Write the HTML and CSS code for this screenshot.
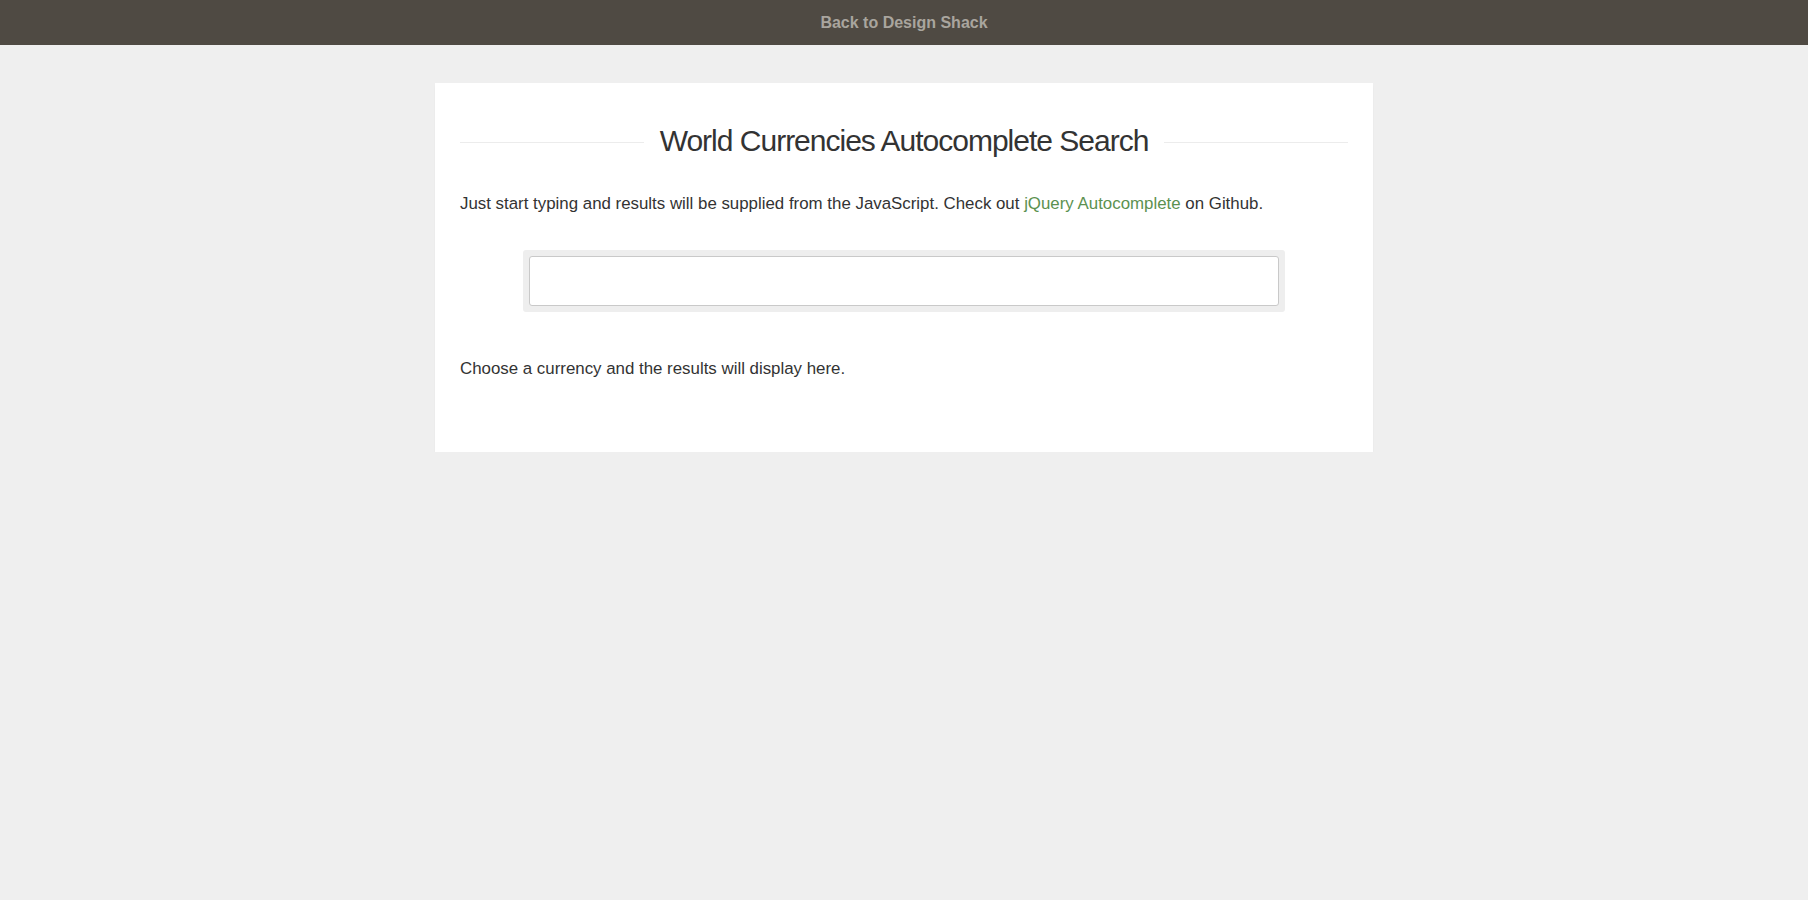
FILE: index.html
```html
<!DOCTYPE html>
<html lang="en">
<head>
<meta charset="utf-8">
<title>World Currencies Autocomplete Search</title>
<link rel="stylesheet" href="styles.css">
</head>
<body>
<div class="topbar"><a href="#" class="back">Back to Design Shack</a></div>
<main class="card">
  <h1 class="title"><span>World Currencies Autocomplete Search</span></h1>
  <p class="intro">Just start typing and results will be supplied from the JavaScript. Check out <a href="#" class="link">jQuery Autocomplete</a> on Github.</p>
  <div class="search-wrap"><input type="text" class="search" aria-label="Currency"></div>
  <p class="result">Choose a currency and the results will display here.</p>
</main>
</body>
</html>
```

FILE: styles.css
```css
html, body {
  margin: 0;
  padding: 0;
}
body {
  background: #efefef;
  font-family: "Liberation Sans", Arial, sans-serif;
  color: #333;
}
.topbar {
  height: 45px;
  background: #4f4a43;
  display: flex;
  align-items: center;
  justify-content: center;
}
.back {
  color: #a9a59e;
  font-weight: bold;
  font-size: 16px;
  text-decoration: none;
  line-height: 1;
  padding-top: 1px;
}
.card {
  width: 888px;
  margin: 38px auto 0;
  background: #fff;
  padding: 41px 25px 71px;
  box-shadow: 0 2px 2px -1px rgba(0,0,0,0.16);
}
.title {
  display: flex;
  align-items: center;
  gap: 16px;
  margin: 0;
  font-weight: normal;
  font-size: 30px;
  letter-spacing: -1px;
  line-height: 34px;
  color: #333;
}
.title::before, .title::after {
  content: "";
  flex: 1;
  height: 1px;
  background: #ececec;
  margin-top: 3px;
}
.intro {
  margin: 34px 0 0;
  font-size: 16.88px;
  line-height: 24px;
}
.link {
  color: #5b9150;
  text-decoration: none;
}
.search-wrap {
  width: 750px;
  margin: 34px auto 0;
  padding: 6px;
  background: #eeeeee;
  border-radius: 3px;
}
.search {
  display: block;
  box-sizing: border-box;
  width: 750px;
  height: 50px;
  margin: 0;
  border: 1px solid #c9c9c9;
  border-radius: 3px;
  background: #fff;
  padding: 0 10px;
  font-size: 16px;
  font-family: inherit;
  outline: none;
}
.result {
  margin: 45px 0 0;
  font-size: 16.88px;
  line-height: 24px;
}
```
